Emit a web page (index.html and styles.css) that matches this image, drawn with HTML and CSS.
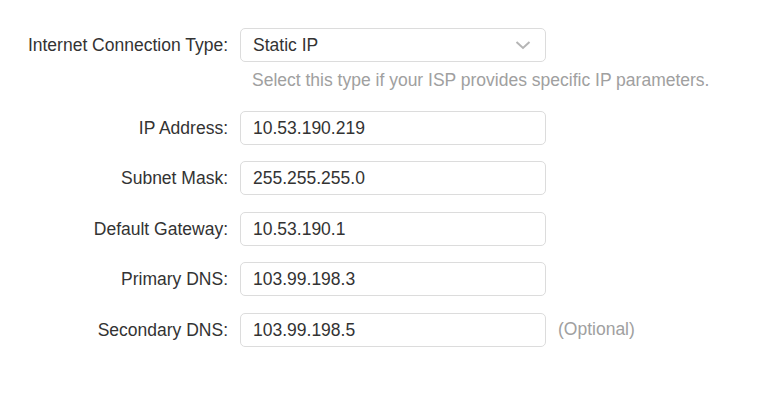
FILE: index.html
```html
<!DOCTYPE html>
<html>
<head>
<meta charset="utf-8">
<link rel="stylesheet" href="styles.css">
</head>
<body>
<form class="form">
  <div class="row">
    <label class="label">Internet Connection Type:</label>
    <div class="field">
      <div class="select">
        <span class="value">Static IP</span>
        <svg class="chev" width="16" height="10" viewBox="0 0 16 10"><path d="M1.5 2 L8 8 L14.5 2" fill="none" stroke="#b5b5b5" stroke-width="2"/></svg>
      </div>
      <div class="hint">Select this type if your ISP provides specific IP parameters.</div>
    </div>
  </div>
  <div class="row">
    <label class="label">IP Address:</label>
    <div class="field"><div class="input">10.53.190.219</div></div>
  </div>
  <div class="row">
    <label class="label">Subnet Mask:</label>
    <div class="field"><div class="input">255.255.255.0</div></div>
  </div>
  <div class="row">
    <label class="label">Default Gateway:</label>
    <div class="field"><div class="input">10.53.190.1</div></div>
  </div>
  <div class="row">
    <label class="label">Primary DNS:</label>
    <div class="field"><div class="input">103.99.198.3</div></div>
  </div>
  <div class="row">
    <label class="label">Secondary DNS:</label>
    <div class="field inline"><div class="input">103.99.198.5</div><span class="opt">(Optional)</span></div>
  </div>
</form>
</body>
</html>
```
FILE: styles.css
```css
html, body {
  margin: 0;
  padding: 0;
  background: #ffffff;
}
body {
  font-family: "Liberation Sans", Arial, sans-serif;
  font-size: 17.5px;
  color: #333333;
}
.form {
  display: flex;
  flex-direction: column;
  gap: 16.5px;
  padding: 28px 0 0 0;
}
.row {
  display: flex;
  align-items: flex-start;
}
.label {
  width: 228px;
  text-align: right;
  line-height: 34px;
  height: 34px;
  padding-right: 12px;
  box-sizing: content-box;
  flex-shrink: 0;
}
.field {
  display: flex;
  flex-direction: column;
}
.field.inline {
  flex-direction: row;
  align-items: center;
}
.select, .input {
  width: 306px;
  height: 34px;
  box-sizing: border-box;
  border: 1px solid #dcdcdc;
  border-radius: 5px;
  padding: 0 12px;
  line-height: 32px;
  display: flex;
  align-items: center;
  justify-content: space-between;
}
.chev {
  margin-right: 2px;
}
.hint {
  color: #a0a0a0;
  margin-top: 8px;
  margin-left: 12px;
  line-height: 20px;
  height: 24px;
}
.opt {
  color: #a0a0a0;
  margin-left: 12px;
}
```
